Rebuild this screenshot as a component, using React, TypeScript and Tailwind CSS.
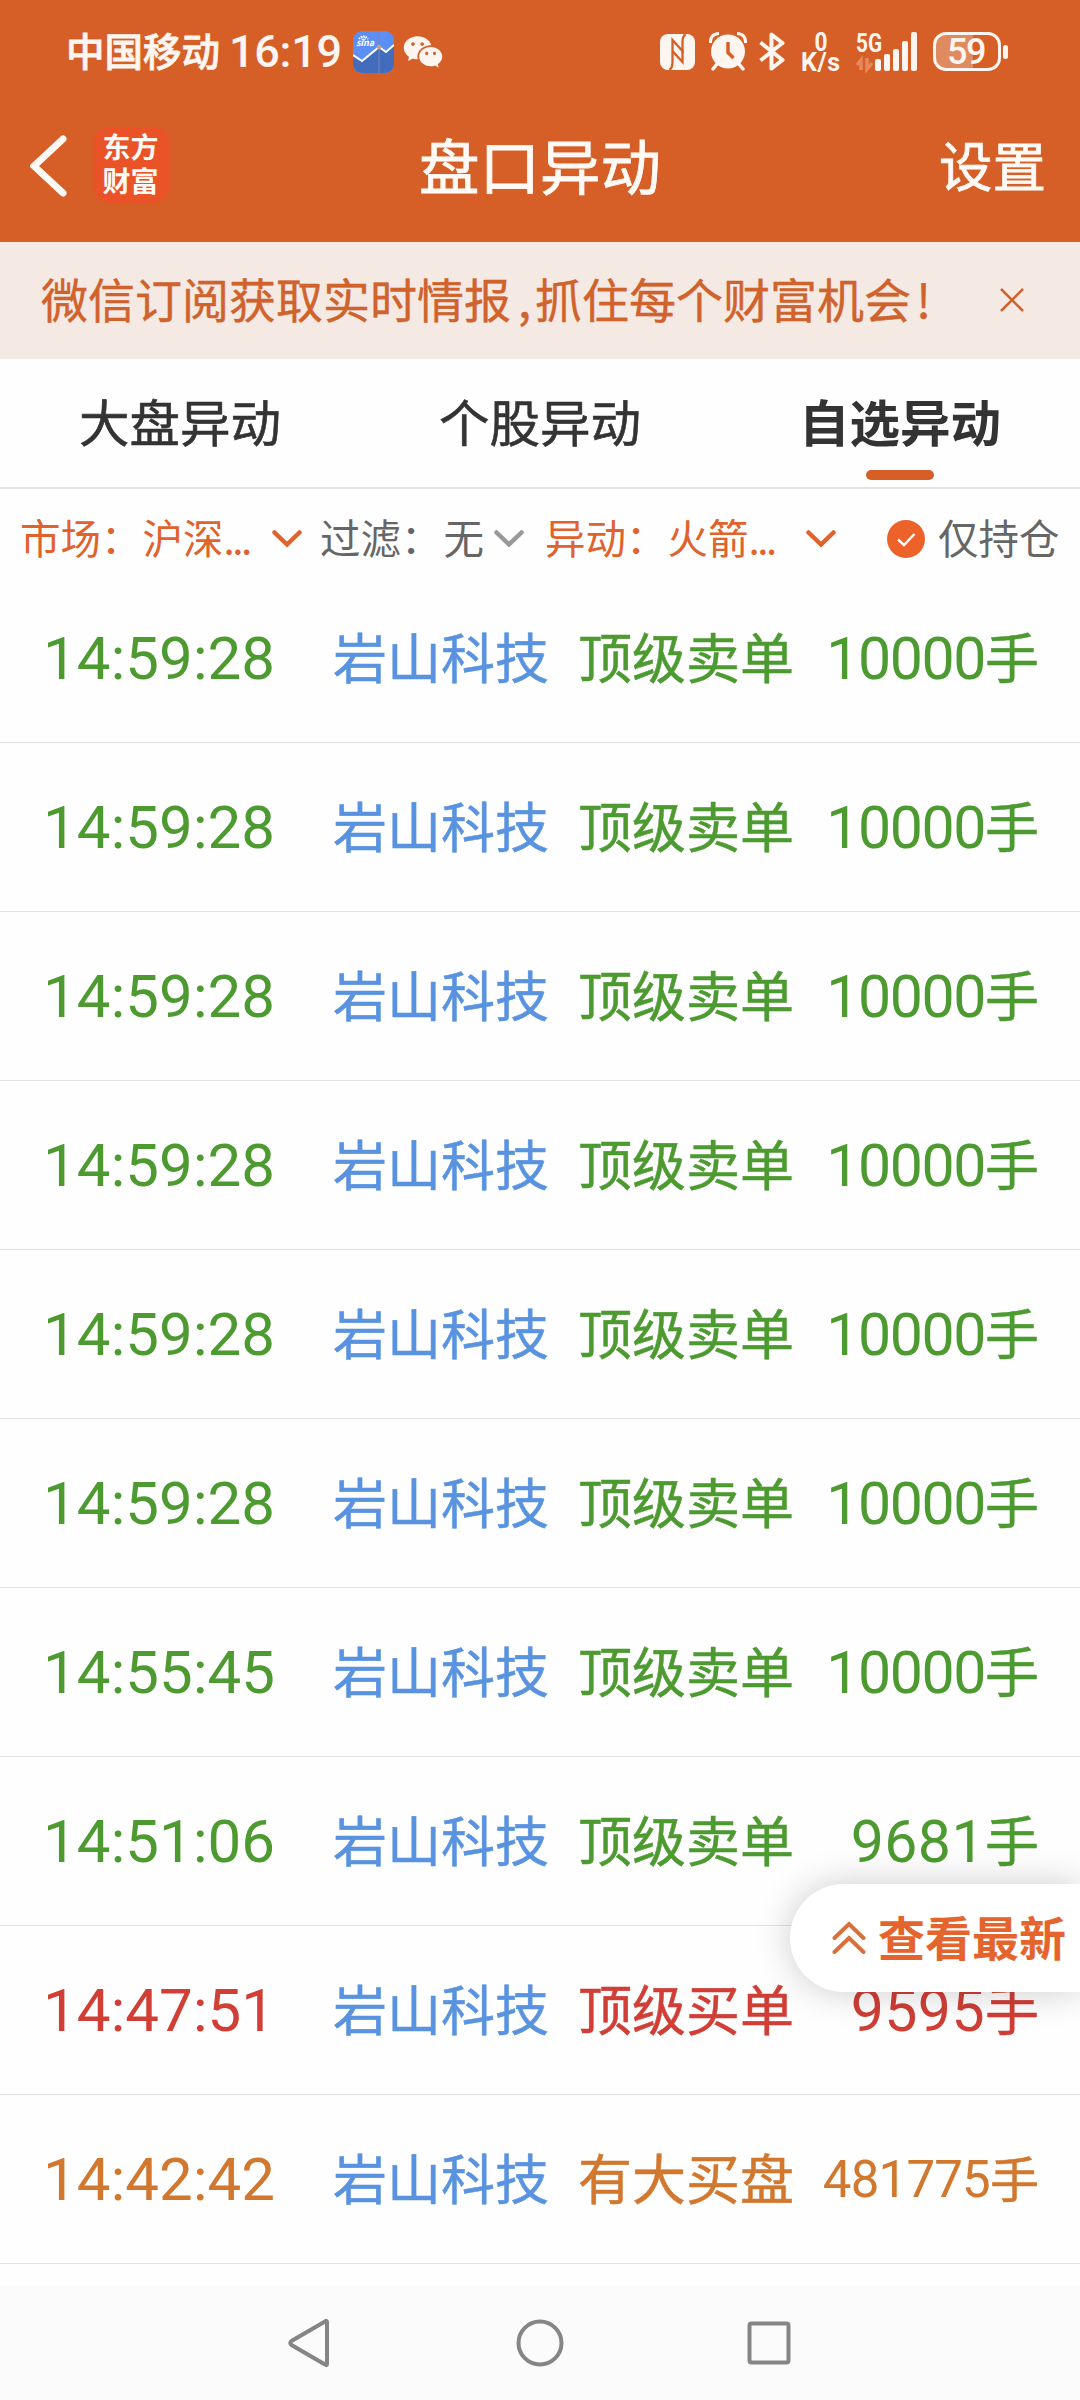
import clsx from 'clsx';
import { RiWechatFill } from 'react-icons/ri';

type Tone = 'sell' | 'buy' | 'big';

interface Alert {
  time: string;
  name: string;
  event: string;
  volume: string;
  tone: Tone;
}

const alerts: Alert[] = [
  { time: '14:59:28', name: '岩山科技', event: '顶级卖单', volume: '10000', tone: 'sell' },
  { time: '14:59:28', name: '岩山科技', event: '顶级卖单', volume: '10000', tone: 'sell' },
  { time: '14:59:28', name: '岩山科技', event: '顶级卖单', volume: '10000', tone: 'sell' },
  { time: '14:59:28', name: '岩山科技', event: '顶级卖单', volume: '10000', tone: 'sell' },
  { time: '14:59:28', name: '岩山科技', event: '顶级卖单', volume: '10000', tone: 'sell' },
  { time: '14:59:28', name: '岩山科技', event: '顶级卖单', volume: '10000', tone: 'sell' },
  { time: '14:55:45', name: '岩山科技', event: '顶级卖单', volume: '10000', tone: 'sell' },
  { time: '14:51:06', name: '岩山科技', event: '顶级卖单', volume: '9681', tone: 'sell' },
  { time: '14:47:51', name: '岩山科技', event: '顶级买单', volume: '9595', tone: 'buy' },
  { time: '14:42:42', name: '岩山科技', event: '有大买盘', volume: '481775', tone: 'big' },
];

const toneClass: Record<Tone, string> = {
  sell: 'text-[#4c9a30]',
  buy: 'text-[#d03e36]',
  big: 'text-[#d2772e]',
};

const volumeClass: Record<number, string> = {
  4: 'text-[59px] tracking-[0.4px]',
  5: 'text-[59px] tracking-[-1.4px]',
  6: 'text-[51px] tracking-[-0.8px]',
};

function StockAppIcon() {
  return (
    <svg width="41" height="42" viewBox="0 0 41 42" className="ml-[11px]">
      <rect width="41" height="42" rx="9" fill="#5b8ff5" />
      <path d="M0 24 L9 30 L26 16 L33 21 L41 14 V33 a9 9 0 0 1 -9 9 H9 a9 9 0 0 1 -9 -9 Z" fill="#436cbd" />
      <path d="M26 0 V42" stroke="#7a83b8" strokeWidth="1" />
      <path d="M0 24 L9 30 L26 16 L33 21 L41 14" fill="none" stroke="#fff" strokeWidth="2" />
      <circle cx="26" cy="16" r="2.2" fill="#c9a184" />
      <path d="M6 8 a5 4.500 0 0 1 9 0" fill="none" stroke="#fff" strokeWidth="1.8" strokeDasharray="1.5 1" />
      <circle cx="10.500" cy="7.500" r="1.800" fill="none" stroke="#fff" strokeWidth="1" />
      <text x="3" y="15" fontSize="9" fontWeight="700" fontStyle="italic" fill="#fff" textLength="18">sina</text>
    </svg>
  );
}

function NfcIcon() {
  return (
    <svg width="35" height="36" viewBox="0 0 35 36">
      <rect width="35" height="36" rx="8" fill="#fdf5f0" />
      <g fill="none" stroke="#d65f28" strokeWidth="2.300">
        <path d="M9.500 36 Q12.500 33.500 12.500 29 V6 L22.500 17 V7 Q22.500 2.500 25.500 0" />
        <path d="M12.500 17 L22.500 28 V15" />
      </g>
    </svg>
  );
}

function AlarmIcon() {
  return (
    <svg width="38" height="39" viewBox="0 0 38 39" className="ml-[14px]">
      <path d="M8 32 L4 37 M30 32 L34 37" stroke="#fdf5f0" strokeWidth="3.500" strokeLinecap="round" />
      <path d="M1.500 11 Q1 2 10 1.500 M28 1.500 Q37 2 36.500 11" fill="none" stroke="#fdf5f0" strokeWidth="3" />
      <circle cx="19" cy="19.500" r="17" fill="#fdf5f0" />
      <path d="M19 10 V20.500 L24.500 26" fill="none" stroke="#d65f28" strokeWidth="3.500" />
    </svg>
  );
}

function BluetoothIcon() {
  return (
    <svg width="26" height="39" viewBox="0 0 26 39" className="ml-[12px]">
      <path d="M1.500 10.500 L23.500 28 L12.500 36.500 V2.500 L23.500 11 L1.500 28.500" fill="none" stroke="#fdf5f0" strokeWidth="4" strokeLinejoin="round" />
    </svg>
  );
}

function SignalIcon() {
  return (
    <svg width="62" height="40" viewBox="0 0 62 40" className="ml-[15px] overflow-visible font-[Roboto]">
      <text x="0" y="19.500" fontSize="26" fontWeight="700" fill="#fdf5f0" textLength="26" lengthAdjust="spacingAndGlyphs">5G</text>
      <path d="M5 38 V28 L1 33 M11 26 V37 L16 31" fill="none" stroke="#e8895d" strokeWidth="3.500" />
      <g fill="#fdf5f0">
        <rect x="19" y="27" width="6" height="12" rx="2" />
        <rect x="28" y="22" width="6" height="17" rx="2" />
        <rect x="37" y="17" width="6" height="22" rx="2" />
        <rect x="46" y="9" width="6" height="30" rx="2" />
        <rect x="55" y="0" width="6" height="39" rx="2" />
      </g>
    </svg>
  );
}

function Battery() {
  return (
    <div className="ml-[15px] flex items-center">
      <div className="flex h-[39px] w-[68px] items-center justify-center rounded-[13px] border-[3.5px] border-[#fdf5f0] bg-linear-to-r from-[#e08a60] from-60% to-[#d65f28] to-60%">
        <span className="pr-[2px] font-[Roboto] text-[36px] leading-none font-medium tracking-[-1.5px]">59</span>
      </div>
      <div className="ml-0.5 h-[14px] w-[5px] rounded-sm bg-[#fdf5f0]" />
    </div>
  );
}

function StatusBar() {
  return (
    <div className="flex h-[103px] items-center pr-[72px] pl-[66px] text-[#fdf5f0]">
      <span className="pb-[4px] text-[38.500px] leading-none font-medium [-webkit-text-stroke:0.8px]">中国移动</span>
      <span className="ml-[9px] font-[Roboto] text-[45px] leading-none font-medium tracking-[-0.3px]">16:19</span>
      <StockAppIcon />
      <RiWechatFill className="ml-[8px] size-[42px]" />
      <div className="ml-auto flex items-center">
        <NfcIcon />
        <AlarmIcon />
        <BluetoothIcon />
        <svg width="40" height="40" viewBox="0 0 40 40" className="ml-[16px] overflow-visible font-[Roboto]" fill="#fdf5f0" fontWeight="700" fontSize="25">
          <text x="20" y="18.500" textAnchor="middle" textLength="13" lengthAdjust="spacingAndGlyphs">0</text>
          <text x="0" y="39" textLength="39">K/s</text>
        </svg>
        <SignalIcon />
        <Battery />
      </div>
    </div>
  );
}

function Header() {
  return (
    <div className="grid h-[139px] grid-cols-3 items-start text-[#fffaf5] [-webkit-text-stroke:0.8px]">
      <div className="flex pt-6 pl-[30px]">
        <svg width="37" height="62" viewBox="0 0 37 62" className="mt-2">
          <path d="M33 4 L4 31 L33 58" fill="none" stroke="currentColor" strokeWidth="7" strokeLinecap="round" />
        </svg>
        <div className="ml-[27px] flex h-[76px] w-[75px] flex-col items-center justify-center rounded-[15px] bg-[#ea5328] pr-[2px] pb-[4px] text-[28px] leading-[34px] font-bold [-webkit-text-stroke:0px]">
          <span>东方</span>
          <span>财富</span>
        </div>
      </div>
      <h1 className="pt-[28px] text-center text-[60.500px] leading-[66px]">盘口异动</h1>
      <div className="pt-[31px] pr-[34px] text-right text-[53.500px] leading-[60px]">设置</div>
    </div>
  );
}

function Chevron({ className }: { className?: string }) {
  return (
    <svg width="30" height="18" viewBox="0 0 30 18" className={clsx('shrink-0', className)}>
      <path d="M2.500 2.500 L15 14.500 L27.500 2.500" fill="none" stroke="currentColor" strokeWidth="4.500" strokeLinecap="round" />
    </svg>
  );
}

function Tabs() {
  const tabs = ['大盘异动', '个股异动', '自选异动'];
  return (
    <div className="grid h-[130px] grid-cols-3 border-b-2 border-[#e3e3e3] text-[50.500px] text-[#333]">
      {tabs.map((tab, i) => (
        <div key={tab} className={clsx('flex flex-col items-center', i === 2 ? 'font-bold' : '[-webkit-text-stroke:0.6px]')}>
          <span className="mt-[31px] leading-[60px]">{tab}</span>
          {i === 2 && <span className="mt-[20px] h-[10px] w-[68px] rounded-full bg-[#d65f28]" />}
        </div>
      ))}
    </div>
  );
}

function Filters() {
  return (
    <div className="flex h-[85px] items-center pt-3.5 pl-[20px] text-[40.500px] leading-[48px] whitespace-nowrap text-[#666]">
      <div className="flex w-[299px] items-center text-[#e0622c]">
        <span className="-mt-[3px]">市场：</span>
        <span className="-mt-[3px] ml-[1px]">沪深<span className="tracking-[-2.5px]">...</span></span>
        <Chevron className="mr-[17px] ml-auto" />
      </div>
      <div className="flex w-[226px] items-center">
        <span className="-mt-[3px] ml-[1px]">过滤：</span>
        <span className="-mt-[3px] ml-[2px]">无</span>
        <Chevron className="mr-[21px] ml-auto text-[#999]" />
      </div>
      <div className="flex w-[291px] items-center text-[#e0622c]">
        <span className="-mt-[3px]">异动：</span>
        <span className="-mt-[3px] ml-[1px]">火箭<span className="tracking-[-2.5px]">...</span></span>
        <Chevron className="ml-auto" />
      </div>
      <svg width="38" height="38" viewBox="0 0 38 38" className="ml-[51px]">
        <circle cx="19" cy="19" r="19" fill="#ec6229" />
        <path d="M11 19.500 L17 25 L27.500 14" fill="none" stroke="#fff" strokeWidth="2.500" />
      </svg>
      <span className="-mt-[3px] ml-[13px]">仅持仓</span>
    </div>
  );
}

function AlertRow({ alert }: { alert: Alert }) {
  return (
    <div className={clsx('flex h-[169px] items-center border-b border-[#e2e2e2] pr-[41px] pl-[43px] text-[54px] leading-none [-webkit-text-stroke:0.5px]', toneClass[alert.tone])}>
      <span className="w-[290px] pt-[2px] font-[Roboto] text-[60px] tracking-[0.1px] [-webkit-text-stroke:0px]">{alert.time}</span>
      <span className="w-[245px] pb-[5px] text-[#5993e0]">{alert.name}</span>
      <span className="pb-[5px]">{alert.event}</span>
      <span className="ml-auto flex items-center">
        <span className={clsx('pt-[1px] font-[Roboto] [-webkit-text-stroke:0px]', volumeClass[alert.volume.length])}>{alert.volume}</span>
        <span className={clsx('pb-[5px]', alert.volume.length > 5 && 'text-[49px]')}>手</span>
      </span>
    </div>
  );
}

function NavBar() {
  return (
    <div className="flex h-[114px] items-start bg-[#fbfbfb] pt-[31px] pl-[287px]">
      <svg width="44" height="52" viewBox="0 0 44 52">
        <path d="M40 5 V47 Q40 49 38 47.500 L4.500 28 Q2 26 4.500 24 L38 4.500 Q40 3 40 5 Z" fill="none" stroke="#858585" strokeWidth="4" />
      </svg>
      <svg width="48" height="48" viewBox="0 0 48 48" className="mt-[2px] ml-[185px]">
        <circle cx="24" cy="24" r="21.500" fill="none" stroke="#858585" strokeWidth="4" />
      </svg>
      <svg width="44" height="44" viewBox="0 0 44 44" className="mt-[4px] ml-[183px]">
        <rect x="2.500" y="2.500" width="39" height="39" rx="2" fill="none" stroke="#858585" strokeWidth="4" />
      </svg>
    </div>
  );
}

export default function App() {
  return (
    <div className="relative flex h-[2400px] w-[1080px] flex-col overflow-hidden bg-[#fefefe] font-['Noto_Sans_CJK_SC',sans-serif]">
      <div className="bg-[#d65f28]">
        <StatusBar />
        <Header />
      </div>

      <div className="flex h-[117px] items-center bg-[#f4e9e3] pl-[41px] text-[47px] text-[#d0622c]">
        <span className="pb-[6px] leading-none whitespace-nowrap [-webkit-text-stroke:0.4px]">
          微信订阅获取实时情报<span className="mr-[4px] ml-[7px]">,</span>抓住每个财富机会<span className="ml-[5px]">!</span>
        </span>
        <svg width="24" height="24" viewBox="0 0 24 24" className="mr-[56px] mb-[2px] ml-auto">
          <path d="M1 1 L23 23 M23 1 L1 23" stroke="currentColor" strokeWidth="2.500" />
        </svg>
      </div>

      <Tabs />
      <Filters />

      <div className="h-[1712px] shrink-0 overflow-hidden">
        {alerts.map((alert, i) => (
          <AlertRow key={i} alert={alert} />
        ))}
      </div>

      <NavBar />

      {/* Jump to latest */}
      <button className="absolute top-[1884px] right-0 flex h-[108px] w-[290px] items-center rounded-l-full bg-white pl-[42px] text-[#e5642d] shadow-[0_0_36px_rgba(0,0,0,0.2)]">
        <svg width="34" height="34" viewBox="0 0 34 34">
          <path d="M2.500 17 L17 3 L31.500 17 M2.500 31 L17 17 L31.500 31" fill="none" stroke="#db6f3c" strokeWidth="4" strokeLinecap="round" />
        </svg>
        <span className="ml-[12px] pb-[6px] text-[47px] leading-none font-bold whitespace-nowrap">查看最新</span>
      </button>
    </div>
  );
}
